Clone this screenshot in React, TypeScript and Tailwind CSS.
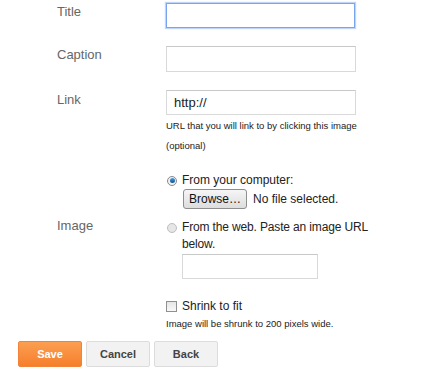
import React from 'react';

const Label: React.FC<{ text?: string }> = ({ text }) => (
  <div className="w-[109px] shrink-0 text-[13px] leading-[16px] text-[#666]">{text}</div>
);

const TextBox: React.FC<{ focused?: boolean; value?: string; className?: string }> = ({ focused, value, className }) => (
  <div
    className={`h-[25px] bg-white flex items-center px-[7px] text-[13px] text-[#222] ${
      focused
        ? 'border border-[#7aa4f0] shadow-[0_0_1px_1px_rgba(120,160,240,0.45)]'
        : 'border border-[#d9d9d9] border-t-[#c8c8c8]'
    } ${className ?? 'w-[189px]'}`}
  >
    {value}
  </div>
);

const Radio: React.FC<{ checked?: boolean }> = ({ checked }) => (
  <span
    className={`w-[10px] h-[10px] rounded-full shrink-0 flex items-center justify-center border ${
      checked ? 'border-[#8a8a8a] bg-[#f0f0f0]' : 'border-[#bdbdbd] bg-[#e6e6e6]'
    }`}
  >
    {checked && <span className="w-[5px] h-[5px] rounded-full bg-gradient-to-b from-[#4aa3e0] to-[#0b4f8c]" />}
  </span>
);

const App: React.FC = () => {
  return (
    <div className="w-[424px] h-[371px] bg-white overflow-hidden font-['Liberation_Sans',Arial,sans-serif] relative">
      <div className="pl-[57px]">
        {/* Title */}
        <div className="flex mt-[3px]">
          <div className="pt-[1px]"><Label text="Title" /></div>
          <TextBox focused />
        </div>

        {/* Caption */}
        <div className="flex mt-[18px]">
          <div className="pt-[1px]"><Label text="Caption" /></div>
          <TextBox className="w-[190px] h-[26px]" />
        </div>

        {/* Link */}
        <div className="flex mt-[18px]">
          <div className="pt-[2px]"><Label text="Link" /></div>
          <div>
            <TextBox value="http://" className="w-[190px]" />
            <div className="mt-[1px] text-[9.5px] leading-[20px] text-[#222]">
              <div>URL that you will link to by clicking this image</div>
              <div>(optional)</div>
            </div>
          </div>
        </div>

        {/* Image */}
        <div className="flex items-center mt-[16px]">
          <Label text="Image" />
          <div className="text-[12px] text-[#222]">
            <div className="flex items-center gap-[5px] leading-[17px] pl-[1px]">
              <Radio checked />
              <span>From your computer:</span>
            </div>
            <div className="flex items-center gap-[6px] pl-[17px]">
              <div className="w-[64px] h-[20px] rounded-[3px] border border-[#8e8e8e] bg-gradient-to-b from-[#f6f6f6] to-[#dddddd] flex items-center justify-center text-[12px] text-[#111]">
                Browse…
              </div>
              <span>No file selected.</span>
            </div>
            <div className="flex items-start gap-[5px] leading-[17px] mt-[10px] pl-[1px]">
              <span className="mt-[4px]"><Radio /></span>
              <div className="tracking-[-0.15px]">
                <div>From the web. Paste an image URL</div>
                <div>below.</div>
              </div>
            </div>
            <div className="pl-[16px] mt-[1px]">
              <TextBox className="w-[136px]" />
            </div>
          </div>
        </div>

        {/* Shrink */}
        <div className="flex mt-[19px]">
          <Label />
          <div>
            <div className="flex items-center gap-[5px] leading-[17px] text-[12px] text-[#222]">
              <span className="w-[11px] h-[11px] border border-[#8f8f8f] bg-gradient-to-b from-[#e6e6e6] to-[#f8f8f8] shrink-0" />
              <span>Shrink to fit</span>
            </div>
            <div className="mt-[2px] text-[9.5px] leading-[14px] text-[#222]">
              Image will be shrunk to 200 pixels wide.
            </div>
          </div>
        </div>
      </div>

      {/* Buttons */}
      <div className="flex gap-[4px] pl-[18px] mt-[10px]">
        <div className="w-[64px] h-[26px] rounded-[2px] border border-[#f2833a] bg-gradient-to-b from-[#fc9e50] to-[#f57f2b] flex items-center justify-center text-[11px] font-bold text-white">
          Save
        </div>
        <div className="w-[64px] h-[26px] rounded-[2px] border border-[#dcdcdc] bg-[#f2f2f2] flex items-center justify-center text-[11px] font-bold text-[#444]">
          Cancel
        </div>
        <div className="w-[64px] h-[26px] rounded-[2px] border border-[#dcdcdc] bg-[#f2f2f2] flex items-center justify-center text-[11px] font-bold text-[#444]">
          Back
        </div>
      </div>
    </div>
  );
};

export default App;
